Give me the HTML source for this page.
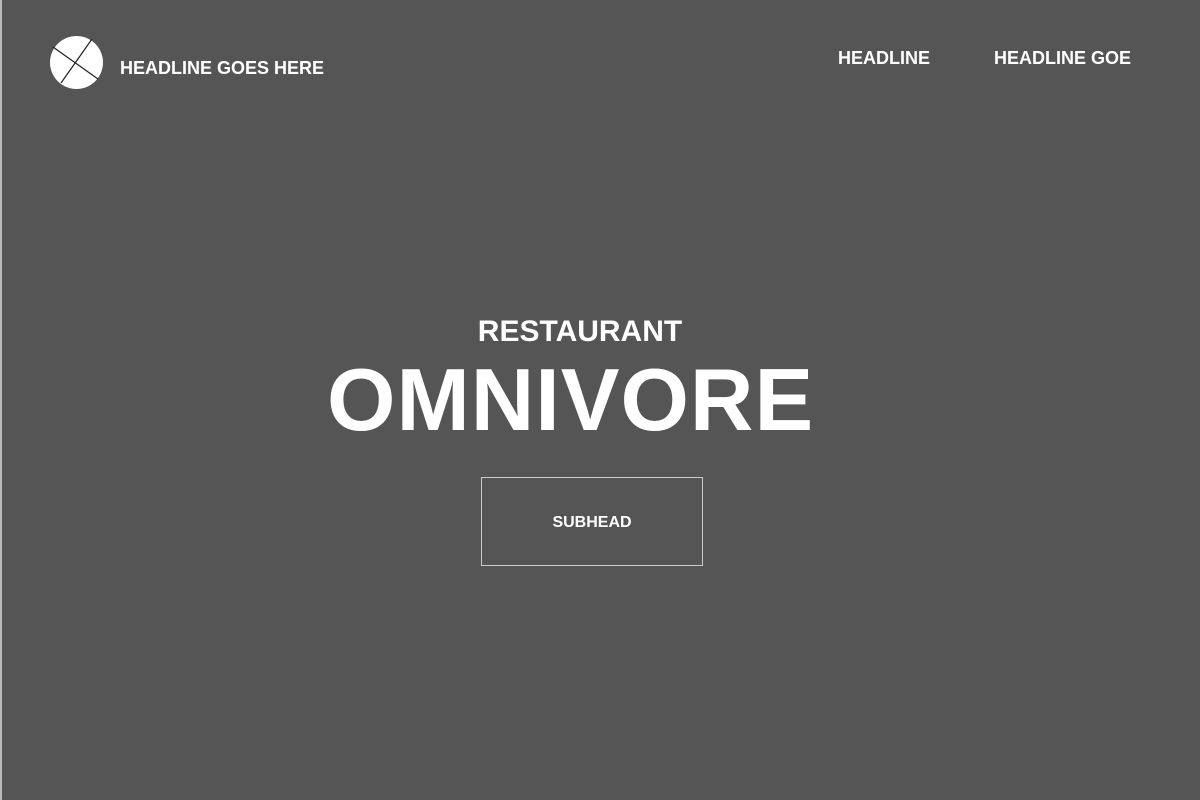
<!DOCTYPE html>
<html><head><meta charset="utf-8"><style>
html,body{margin:0;padding:0}
body{width:1200px;height:800px;background:#555;position:relative;overflow:hidden;font-family:"Liberation Sans",sans-serif;font-weight:bold;color:#fff}
.t{position:absolute;line-height:1;white-space:nowrap}
.edge{position:absolute;left:0;top:0;width:2px;height:800px;background:#bbb}
.box{position:absolute;left:481px;top:477px;width:220px;height:87px;border:1px solid #ccc}
</style></head><body>
<div class="edge"></div>
<svg style="position:absolute;left:49px;top:35px" width="55" height="55" viewBox="0 0 55 55">
<circle cx="27.5" cy="27.5" r="26.5" fill="#fff"/>
<line x1="4" y1="12" x2="49" y2="44" stroke="#222" stroke-width="1.2"/>
<line x1="43" y1="4" x2="12" y2="48" stroke="#222" stroke-width="1.2"/>
</svg>
<div class="t" style="left:120px;top:59px;font-size:18px">HEADLINE GOES HERE</div>
<div class="t" style="left:838px;top:49px;font-size:18px">HEADLINE</div>
<div class="t" style="left:994px;top:49px;font-size:18px">HEADLINE GOE</div>
<div class="t" style="left:0;width:1160px;text-align:center;top:317px;font-size:30px">RESTAURANT</div>
<div class="t" style="left:327px;top:356px;font-size:88px;letter-spacing:1px">OMNIVORE</div>
<div class="box"></div>
<div class="t" style="left:482px;width:220px;text-align:center;top:515px;font-size:16px">SUBHEAD</div>
</body></html>
